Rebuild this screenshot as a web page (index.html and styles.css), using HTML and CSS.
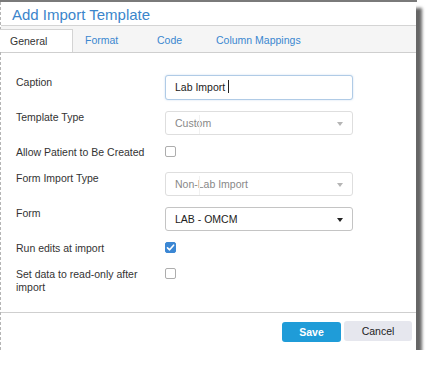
FILE: index.html
```html
<!DOCTYPE html>
<html lang="en">
  <head>
    <meta charset="UTF-8" />
    <meta name="viewport" content="width=device-width, initial-scale=1.0" />
    <title>Add Import Template</title>
    <link rel="stylesheet" href="styles.css">
  </head>
  <body>
    <div class="backdrop"></div>
    <div class="dialog">
      <div class="title">Add Import Template</div>

      <div class="tabs">
        <div class="tab tab-general active">General</div>
        <div class="tab tab-format">Format</div>
        <div class="tab tab-code">Code</div>
        <div class="tab">Column Mappings</div>
      </div>

      <div class="content">
        <div class="row">
          <label class="label">Caption</label>
          <div class="input focused">Lab Import<span class="caret"></span></div>
        </div>

        <div class="row">
          <label class="label">Template Type</label>
          <div class="select disabled">
            Custom
            <span class="ghost"></span>
            <span class="arrow"></span>
          </div>
        </div>

        <div class="row row-check">
          <label class="label">Allow Patient to Be Created</label>
          <span class="check"></span>
        </div>

        <div class="row">
          <label class="label">Form Import Type</label>
          <div class="select disabled">
            Non-Lab Import
            <span class="ghost"></span>
            <span class="arrow"></span>
          </div>
        </div>

        <div class="row">
          <label class="label">Form</label>
          <div class="select">
            LAB - OMCM
            <span class="arrow"></span>
          </div>
        </div>

        <div class="row row-check">
          <label class="label">Run edits at import</label>
          <span class="check checked">
            <svg width="9" height="9" viewBox="0 0 9 9">
              <path d="M1.5 4.8 L3.6 6.8 L7.6 2.2" fill="none" stroke="#fff" stroke-width="1.6" stroke-linecap="round" stroke-linejoin="round" />
            </svg>
          </span>
        </div>

        <div class="row row-check">
          <label class="label">Set data to read-only after import</label>
          <span class="check"></span>
        </div>
      </div>

      <div class="footer">
        <button class="btn btn-save">Save</button>
        <button class="btn btn-cancel">Cancel</button>
      </div>
    </div>
  </body>
</html>
```

FILE: styles.css
```css
body {
  margin: 0;
  background-color: #fff;
  font-family: "Liberation Sans", Arial, sans-serif;
  font-size: 10.5px;
  color: #333;
}

.backdrop {
  width: 417px;
  height: 2px;
  background-color: #7a7a7a;
}

.dialog {
  position: relative;
  width: 416px;
  background-color: #fff;
  border-left: 1px dashed #b5b5b5;
  box-sizing: border-box;
  box-shadow: 6px 6px 3px rgba(0, 0, 0, 0.6);
}

.title {
  height: 23px;
  padding-left: 11px;
  font-size: 15px;
  line-height: 26px;
  color: #3b85cb;
}

.tabs {
  display: flex;
  gap: 3px;
  height: 26px;
  background-color: #f5f5f5;
  border-top: 1px solid #d4d4d4;
  border-bottom: 1px solid #cfcfcf;
}

.tab {
  padding-left: 9px;
  margin-top: 3px;
  line-height: 23px;
  color: #3a87d0;
  box-sizing: border-box;
}

.tab-general {
  width: 73px;
}

.tab-format {
  width: 69px;
}

.tab-code {
  width: 56px;
}

.tab.active {
  background-color: #fff;
  color: #333;
  border-top: 1px solid #d4d4d4;
  border-right: 1px solid #d4d4d4;
  margin-left: -1px;
  padding-left: 10px;
}

.content {
  display: flex;
  flex-direction: column;
  gap: 10px;
  height: 260px;
  padding: 22px 0 0 15px;
  box-sizing: border-box;
  border-bottom: 1px solid #cfcfcf;
}

.row {
  display: flex;
  align-items: flex-start;
}

.row-check {
  min-height: 16px;
}

.label {
  width: 149px;
  padding-right: 10px;
  padding-top: 1px;
  box-sizing: border-box;
  line-height: 13px;
}

.input,
.select {
  position: relative;
  width: 188px;
  height: 25px;
  box-sizing: border-box;
  padding-left: 9px;
  line-height: 23px;
  border: 1px solid #c4c4c4;
  border-radius: 3px;
  background-color: #fff;
}

.input.focused {
  border-color: #b0cbe6;
  box-shadow: 0 0 2px rgba(90, 150, 210, 0.35);
  color: #222;
}

.caret {
  display: inline-block;
  width: 1px;
  height: 13px;
  margin-left: 3px;
  vertical-align: -2px;
  background-color: #222;
}

.select {
  color: #222;
  margin-top: 1px;
  height: 24px;
}

.select.disabled {
  color: #888;
  border-color: #dedede;
}

.ghost {
  position: absolute;
  left: 33px;
  top: 3px;
  bottom: 0;
  border-left: 1px solid #f1f1f1;
}

.arrow {
  position: absolute;
  right: 9px;
  top: 10px;
  width: 0;
  height: 0;
  border-left: 3.5px solid transparent;
  border-right: 3.5px solid transparent;
  border-top: 4px solid #222;
}

.select.disabled .arrow {
  border-top-color: #b5b5b5;
}

.check {
  display: flex;
  justify-content: center;
  align-items: center;
  width: 11px;
  height: 11px;
  margin-top: 1px;
  border: 1px solid #adadad;
  border-radius: 2px;
  box-sizing: border-box;
  background-color: #fff;
}

.check.checked {
  background-color: #3b87d4;
  border-color: #3b87d4;
}

.footer {
  display: flex;
  justify-content: flex-end;
  gap: 3px;
  height: 37px;
  padding: 8px 4px 0 0;
  box-sizing: border-box;
}

.btn {
  height: 20px;
  border: none;
  border-radius: 3px;
  font-family: "Liberation Sans", Arial, sans-serif;
  font-size: 10.5px;
  padding: 0;
}

.btn-save {
  width: 59px;
  margin-top: 1px;
  background-color: #1f9cd8;
  color: #fff;
  font-weight: bold;
}

.btn-cancel {
  width: 68px;
  background-color: #e6e7ee;
  color: #222;
}
```
